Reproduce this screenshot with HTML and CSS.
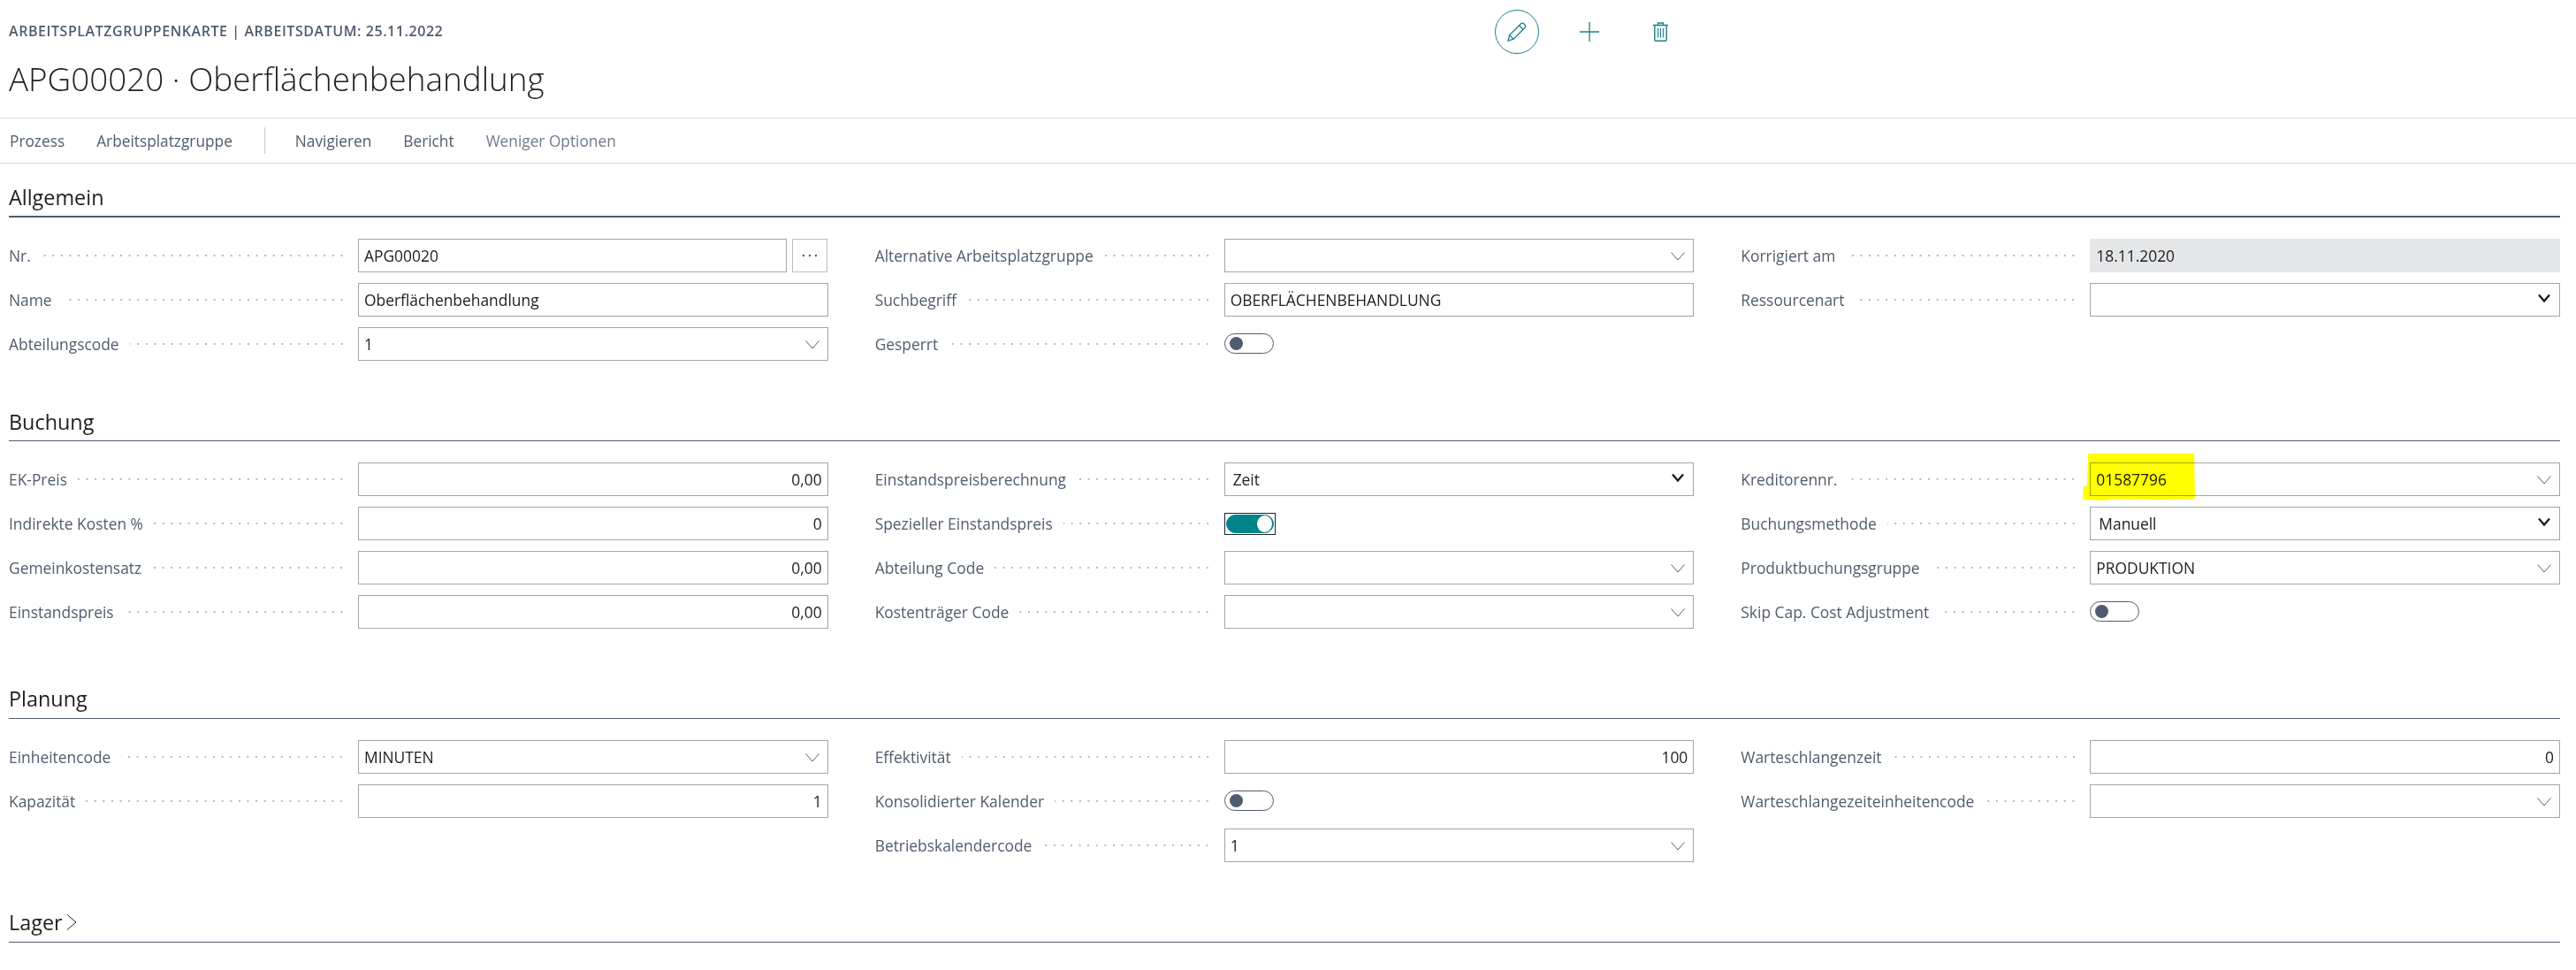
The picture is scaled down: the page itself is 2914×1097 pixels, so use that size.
FILE: index.html
```html
<!DOCTYPE html>
<html lang="de">

<head>
    <meta charset="UTF-8">
    <meta name="viewport" content="width=device-width, initial-scale=1.0">
    <title>APG00020 · Oberflächenbehandlung</title>
    <link rel="stylesheet" href="styles.css">
</head>

<body>
    <svg class="sprite" aria-hidden="true">
        <symbol id="chev" viewBox="0 0 16 10">
            <path d="M0.5 0.5 L8 9 L15.5 0.5" fill="none" stroke="#505c6d" stroke-width="1" />
        </symbol>
        <symbol id="chev-bold" viewBox="0 0 16 10">
            <path d="M2 1.5 L8 8.5 L14 1.5" fill="none" stroke="#212121" stroke-width="2.4" />
        </symbol>
    </svg>

    <header class="page-head">
        <div class="page-titles">
            <div class="caption">ARBEITSPLATZGRUPPENKARTE | ARBEITSDATUM: 25.11.2022</div>
            <h1 class="title">APG00020 · Oberflächenbehandlung</h1>
        </div>
        <div class="actions">
            <span class="edit-btn">
                <svg width="22" height="22" viewBox="0 0 22 22" fill="none" stroke="#1b8188" stroke-width="1.3">
                    <path d="M1 21 L2.6 14.6 L15.8 1.6 Q17 0.6 18.4 1.6 L20.2 3.4 Q21.2 4.8 20.2 6 L7.2 19.2 Z" />
                    <path d="M2.6 14.6 L7.2 19.2 M13.6 3.8 L18 8.2" />
                </svg>
            </span>
            <svg class="plus-icon" width="22" height="22" viewBox="0 0 22 22" fill="none" stroke="#1b8188" stroke-width="1.3">
                <path d="M0 11 H22 M11 0 V22" />
            </svg>
            <svg class="trash-icon" width="17" height="22" viewBox="0 0 17 22" fill="none" stroke="#1b8188" stroke-width="1.4">
                <path d="M0 3.5 H17 M5.5 3.5 V1 H11.5 V3.5" />
                <path d="M1.8 3.5 V20 Q1.8 21.2 3 21.2 H14 Q15.2 21.2 15.2 20 V3.5" />
                <path d="M5.6 7 V17.5 M8.5 7 V17.5 M11.4 7 V17.5" stroke-width="1.1" />
            </svg>
        </div>
    </header>

    <nav class="toolbar">
        <a class="tool">Prozess</a>
        <a class="tool">Arbeitsplatzgruppe</a>
        <span class="tool-sep"></span>
        <a class="tool">Navigieren</a>
        <a class="tool">Bericht</a>
        <a class="tool tool-muted">Weniger Optionen</a>
    </nav>

    <section class="section">
        <h2 class="section-head section-head-active">Allgemein</h2>
        <div class="columns">
            <div class="col">
                <div class="row">
                    <div class="label"><span>Nr.</span><i class="dots"></i></div>
                    <div class="field field-lookup">APG00020</div>
                    <div class="more-btn">
                        <svg width="18" height="4" viewBox="0 0 18 4" fill="#505c6d">
                            <circle cx="2" cy="2" r="1.2" />
                            <circle cx="9" cy="2" r="1.2" />
                            <circle cx="16" cy="2" r="1.2" />
                        </svg>
                    </div>
                </div>
                <div class="row">
                    <div class="label"><span>Name</span><i class="dots"></i></div>
                    <div class="field">Oberflächenbehandlung</div>
                </div>
                <div class="row">
                    <div class="label"><span>Abteilungscode</span><i class="dots"></i></div>
                    <div class="field">1<svg class="chevron"><use href="#chev" /></svg></div>
                </div>
            </div>
            <div class="col">
                <div class="row">
                    <div class="label"><span>Alternative Arbeitsplatzgruppe</span><i class="dots"></i></div>
                    <div class="field"><svg class="chevron"><use href="#chev" /></svg></div>
                </div>
                <div class="row">
                    <div class="label"><span>Suchbegriff</span><i class="dots"></i></div>
                    <div class="field">OBERFLÄCHENBEHANDLUNG</div>
                </div>
                <div class="row">
                    <div class="label"><span>Gesperrt</span><i class="dots"></i></div>
                    <span class="toggle"><i class="thumb"></i></span>
                </div>
            </div>
            <div class="col">
                <div class="row">
                    <div class="label"><span>Korrigiert am</span><i class="dots"></i></div>
                    <div class="field field-disabled">18.11.2020</div>
                </div>
                <div class="row">
                    <div class="label"><span>Ressourcenart</span><i class="dots"></i></div>
                    <div class="field"><svg class="chevron chevron-bold"><use href="#chev-bold" /></svg></div>
                </div>
            </div>
        </div>
    </section>

    <section class="section section-tall">
        <h2 class="section-head">Buchung</h2>
        <div class="columns">
            <div class="col">
                <div class="row">
                    <div class="label"><span>EK-Preis</span><i class="dots"></i></div>
                    <div class="field field-num">0,00</div>
                </div>
                <div class="row">
                    <div class="label"><span>Indirekte Kosten %</span><i class="dots"></i></div>
                    <div class="field field-num">0</div>
                </div>
                <div class="row">
                    <div class="label"><span>Gemeinkostensatz</span><i class="dots"></i></div>
                    <div class="field field-num">0,00</div>
                </div>
                <div class="row">
                    <div class="label"><span>Einstandspreis</span><i class="dots"></i></div>
                    <div class="field field-num">0,00</div>
                </div>
            </div>
            <div class="col">
                <div class="row">
                    <div class="label"><span>Einstandspreisberechnung</span><i class="dots"></i></div>
                    <div class="field field-option">Zeit<svg class="chevron chevron-bold"><use href="#chev-bold" /></svg></div>
                </div>
                <div class="row">
                    <div class="label"><span>Spezieller Einstandspreis</span><i class="dots"></i></div>
                    <span class="toggle-focus"><span class="toggle toggle-on"><i class="thumb"></i></span></span>
                </div>
                <div class="row">
                    <div class="label"><span>Abteilung Code</span><i class="dots"></i></div>
                    <div class="field"><svg class="chevron"><use href="#chev" /></svg></div>
                </div>
                <div class="row">
                    <div class="label"><span>Kostenträger Code</span><i class="dots"></i></div>
                    <div class="field"><svg class="chevron"><use href="#chev" /></svg></div>
                </div>
            </div>
            <div class="col">
                <div class="row">
                    <div class="label"><span>Kreditorennr.</span><i class="dots"></i></div>
                    <div class="field">01587796<svg class="chevron"><use href="#chev" /></svg>
                        <svg class="marker" width="127" height="53" viewBox="0 0 127 53">
                            <path d="M6 0 H126 L127 51 L85 52 L40 51 L24 53 L0 52 L1 38 L5 36 Z" fill="#ffff00" />
                        </svg>
                    </div>
                </div>
                <div class="row">
                    <div class="label"><span>Buchungsmethode</span><i class="dots"></i></div>
                    <div class="field field-option">Manuell<svg class="chevron chevron-bold"><use href="#chev-bold" /></svg></div>
                </div>
                <div class="row">
                    <div class="label"><span>Produktbuchungsgruppe</span><i class="dots"></i></div>
                    <div class="field">PRODUKTION<svg class="chevron"><use href="#chev" /></svg></div>
                </div>
                <div class="row">
                    <div class="label"><span>Skip Cap. Cost Adjustment</span><i class="dots"></i></div>
                    <span class="toggle"><i class="thumb"></i></span>
                </div>
            </div>
        </div>
    </section>

    <section class="section">
        <h2 class="section-head">Planung</h2>
        <div class="columns">
            <div class="col">
                <div class="row">
                    <div class="label"><span>Einheitencode</span><i class="dots"></i></div>
                    <div class="field">MINUTEN<svg class="chevron"><use href="#chev" /></svg></div>
                </div>
                <div class="row">
                    <div class="label"><span>Kapazität</span><i class="dots"></i></div>
                    <div class="field field-num">1</div>
                </div>
            </div>
            <div class="col">
                <div class="row">
                    <div class="label"><span>Effektivität</span><i class="dots"></i></div>
                    <div class="field field-num">100</div>
                </div>
                <div class="row">
                    <div class="label"><span>Konsolidierter Kalender</span><i class="dots"></i></div>
                    <span class="toggle"><i class="thumb"></i></span>
                </div>
                <div class="row">
                    <div class="label"><span>Betriebskalendercode</span><i class="dots"></i></div>
                    <div class="field">1<svg class="chevron"><use href="#chev" /></svg></div>
                </div>
            </div>
            <div class="col">
                <div class="row">
                    <div class="label"><span>Warteschlangenzeit</span><i class="dots"></i></div>
                    <div class="field field-num">0</div>
                </div>
                <div class="row">
                    <div class="label"><span>Warteschlangezeiteinheitencode</span><i class="dots"></i></div>
                    <div class="field"><svg class="chevron"><use href="#chev" /></svg></div>
                </div>
            </div>
        </div>
    </section>

    <section class="section">
        <h2 class="section-head">Lager<svg class="lager-chev" width="12" height="18" viewBox="0 0 12 18"><path d="M1 0.5 L11 9 L1 17.5" fill="none" stroke="#212121" stroke-width="1" /></svg></h2>
    </section>
</body>

</html>
```

FILE: styles.css
```css
body {
    font-family: "Open Sans", "Noto Sans", Arial, sans-serif;
    font-size: 17.4px;
    color: #212121;
    background-color: #fff;
    margin: 0;
}

.sprite {
    position: absolute;
    width: 0;
    height: 0;
}

.page-head {
    display: flex;
    height: 133px;
    border-bottom: 1px solid #d8d8d8;
}

.page-titles {
    width: 1691px;
    padding: 24px 0 0 10px;
    box-sizing: border-box;
}

.caption {
    font-size: 16px;
    line-height: 22px;
    font-weight: 600;
    letter-spacing: 0.56px;
    color: #505c6d;
}

.title {
    margin: 18px 0 0;
    font-size: 36.8px;
    line-height: 50px;
    font-weight: 300;
    color: #212121;
}

.actions {
    display: flex;
    align-items: center;
    height: 50px;
    margin-top: 11px;
}

.edit-btn {
    display: flex;
    align-items: center;
    justify-content: center;
    width: 50px;
    height: 50px;
    box-sizing: border-box;
    border: 1.5px solid #1b8188;
    border-radius: 50%;
}

.plus-icon {
    margin-left: 46px;
}

.trash-icon {
    margin-left: 61px;
}

.toolbar {
    display: flex;
    align-items: center;
    height: 50px;
    padding-left: 11px;
    font-size: 17.3px;
    border-bottom: 1px solid #d8d8d8;
}

.tool {
    margin-right: 36px;
    color: #505c6d;
}

.tool-muted {
    color: #6f7b8a;
}

.tool-sep {
    width: 1px;
    height: 30px;
    margin-right: 34px;
    background-color: #c8c8c8;
}

.section {
    margin-top: 19px;
    margin-bottom: 44.4px;
    padding: 0 18px 0 10px;
}

.section-tall {
    margin-bottom: 55.4px;
}

.section-head {
    height: 37px;
    margin: 0;
    padding-bottom: 3px;
    display: flex;
    align-items: center;
    font-size: 23.4px;
    font-weight: 500;
    color: #212121;
    border-bottom: 1px solid #505c6d;
}

.section-head-active {
    border-bottom-width: 2px;
}

.lager-chev {
    margin-left: 4px;
}

.columns {
    display: grid;
    grid-template-columns: repeat(3, 1fr);
    column-gap: 53px;
    padding-top: 18.6px;
}

.section + .section {
    margin-top: 0;
}

.row {
    display: flex;
    align-items: center;
    height: 49.7px;
}

.label {
    display: flex;
    align-items: center;
    gap: 12px;
    flex: 0 0 395px;
    box-sizing: border-box;
    padding: 0 14px 0 0;
    color: #505c6d;
    white-space: nowrap;
}

.dots {
    flex: 1;
    height: 4px;
    background-image: radial-gradient(circle, #b4b9c1 1px, transparent 1.2px);
    background-size: 9.6px 4px;
    background-position: right center;
}

.field {
    position: relative;
    flex: 1;
    display: flex;
    align-items: center;
    height: 38px;
    box-sizing: border-box;
    padding: 0 6px;
    border: 1px solid #a6a6a6;
    line-height: 36px;
    white-space: nowrap;
}

.field-num {
    justify-content: flex-end;
}

.field-option {
    padding-left: 9px;
}

.field-disabled {
    background-color: #e5e6e8;
    border-color: #e5e6e8;
}

.field-lookup {
    flex: 0 0 485px;
}

.more-btn {
    display: flex;
    align-items: center;
    justify-content: center;
    width: 40px;
    height: 38px;
    margin-left: 6px;
    box-sizing: border-box;
    border: 1px solid #bdbdbd;
}

.chevron {
    position: absolute;
    right: 9px;
    top: 14px;
    width: 16px;
    height: 10px;
}

.chevron-bold {
    top: 11px;
}

.toggle {
    display: flex;
    align-items: center;
    width: 56px;
    height: 23px;
    box-sizing: border-box;
    padding-left: 5px;
    border: 1px solid #505c6d;
    border-radius: 12px;
}

.thumb {
    width: 15px;
    height: 15px;
    border-radius: 50%;
    background-color: #505c6d;
}

.toggle-focus {
    display: flex;
    padding: 1px;
    border: 1px solid #212121;
}

.toggle-on {
    width: 54px;
    height: 21px;
    justify-content: flex-end;
    padding: 0 1px 0 0;
    border-color: #008489;
    background-color: #008489;
}

.toggle-on .thumb {
    width: 17px;
    height: 19px;
    background-color: #fff;
}

.marker {
    position: absolute;
    left: -9px;
    top: -11px;
    mix-blend-mode: multiply;
}
```
